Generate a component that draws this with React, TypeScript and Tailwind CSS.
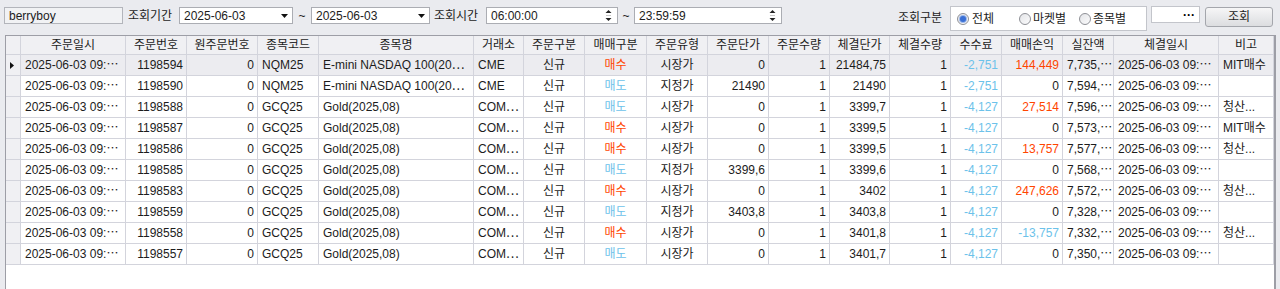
import React from "react"

type Align = "L" | "R" | "C"

const alignCls: Record<Align, string> = {
  L: "justify-start pl-[4px]",
  R: "justify-end pr-[3px]",
  C: "justify-center",
}

const cols: { label: string; w: string; a: Align }[] = [
  { label: "주문일시", w: "w-[105px]", a: "L" },
  { label: "주문번호", w: "w-[61px]", a: "R" },
  { label: "원주문번호", w: "w-[71px]", a: "R" },
  { label: "종목코드", w: "w-[61px]", a: "L" },
  { label: "종목명", w: "w-[155px]", a: "L" },
  { label: "거래소", w: "w-[50px]", a: "L" },
  { label: "주문구분", w: "w-[61px]", a: "C" },
  { label: "매매구분", w: "w-[62px]", a: "C" },
  { label: "주문유형", w: "w-[61px]", a: "C" },
  { label: "주문단가", w: "w-[61px]", a: "R" },
  { label: "주문수량", w: "w-[61px]", a: "R" },
  { label: "체결단가", w: "w-[60px]", a: "R" },
  { label: "체결수량", w: "w-[61px]", a: "R" },
  { label: "수수료", w: "w-[51px]", a: "R" },
  { label: "매매손익", w: "w-[61px]", a: "R" },
  { label: "실잔액", w: "w-[51px]", a: "L" },
  { label: "체결일시", w: "w-[105px]", a: "L" },
  { label: "비고", w: "w-[55px]", a: "L" },
]

const RED = "text-[#ff4500]"
const BLUE = "text-[#6cc2ea]"

const nasdaq = "E-mini NASDAQ 100(20⋯"
const gold = "Gold(2025,08)"

// no, code, name, exch, side, type, price, fillPrice, fee, pnl, balance, note
const rows: string[][] = [
  ["1198594", "NQM25", nasdaq, "CME", "매수", "시장가", "0", "21484,75", "-2,751", "144,449", "7,735,⋯", "MIT매수"],
  ["1198590", "NQM25", nasdaq, "CME", "매도", "지정가", "21490", "21490", "-2,751", "0", "7,594,⋯", ""],
  ["1198588", "GCQ25", gold, "COM⋯", "매도", "시장가", "0", "3399,7", "-4,127", "27,514", "7,596,⋯", "청산..."],
  ["1198587", "GCQ25", gold, "COM⋯", "매수", "시장가", "0", "3399,5", "-4,127", "0", "7,573,⋯", "MIT매수"],
  ["1198586", "GCQ25", gold, "COM⋯", "매수", "시장가", "0", "3399,5", "-4,127", "13,757", "7,577,⋯", "청산..."],
  ["1198585", "GCQ25", gold, "COM⋯", "매도", "지정가", "3399,6", "3399,6", "-4,127", "0", "7,568,⋯", ""],
  ["1198583", "GCQ25", gold, "COM⋯", "매수", "시장가", "0", "3402", "-4,127", "247,626", "7,572,⋯", "청산..."],
  ["1198559", "GCQ25", gold, "COM⋯", "매도", "지정가", "3403,8", "3403,8", "-4,127", "0", "7,328,⋯", ""],
  ["1198558", "GCQ25", gold, "COM⋯", "매수", "시장가", "0", "3401,8", "-4,127", "-13,757", "7,332,⋯", "청산..."],
  ["1198557", "GCQ25", gold, "COM⋯", "매도", "시장가", "0", "3401,7", "-4,127", "0", "7,350,⋯", ""],
]

function ComboArrow() {
  return (
    <svg width="7" height="4" viewBox="0 0 7 4" className="ml-auto mr-[4px]">
      <path d="M0 0H7L3.5 4Z" fill="#111" />
    </svg>
  )
}

function Spin() {
  return (
    <svg width="7" height="13" viewBox="0 0 7 13" className="ml-auto mr-[5px]">
      <path d="M0.5 4H6.5L3.5 1Z" fill="#222" />
      <path d="M0.5 9H6.5L3.5 12Z" fill="#222" />
      <path d="M1 6.5H6" stroke="#c8c8c8" strokeWidth="1" />
    </svg>
  )
}

function Radio({ on }: { on?: boolean }) {
  return (
    <span className="flex h-[12px] w-[12px] items-center justify-center rounded-full border border-[#8e9096] bg-gradient-to-br from-[#e4e5e8] to-[#fbfbfc]">
      {on && <span className="h-[6px] w-[6px] rounded-full bg-[#3a6fd4] ring-1 ring-[#9bb7ea]" />}
    </span>
  )
}

export default function App() {
  return (
    <div className="flex h-[289px] w-[1280px] flex-col overflow-hidden bg-[#eaebef] font-['Liberation_Sans','Noto_Sans_CJK_KR',sans-serif] text-[12px] text-[#1c1c1c]">
      {/* search bar */}
      <div className="flex h-[35px] shrink-0 items-start pr-[7px]">
        <div className="ml-[4px] mt-[7px] flex h-[17px] w-[119px] items-center border border-[#b3b5bb] bg-[#f1f2f4] pl-[4px] leading-none">
          berryboy
        </div>
        <div className="ml-[5px] mt-[7px] flex h-[17px] w-[47px] items-center leading-none">조회기간</div>
        <div className="ml-[4px] mt-[7px] flex h-[17px] w-[114px] items-center border border-[#abadb3] bg-white pl-[4px] leading-none">
          2025-06-03
          <ComboArrow />
        </div>
        <div className="mt-[7px] flex h-[17px] w-[18px] items-center justify-center leading-none">~</div>
        <div className="mt-[7px] flex h-[17px] w-[119px] items-center border border-[#abadb3] bg-white pl-[4px] leading-none">
          2025-06-03
          <ComboArrow />
        </div>
        <div className="ml-[4px] mt-[7px] flex h-[17px] w-[47px] items-center leading-none">조회시간</div>
        <div className="ml-[5px] mt-[7px] flex h-[17px] w-[132px] items-center border border-[#abadb3] bg-white pl-[4px] leading-none">
          06:00:00
          <Spin />
        </div>
        <div className="mt-[7px] flex h-[17px] w-[16px] items-center justify-center leading-none">~</div>
        <div className="mt-[7px] flex h-[17px] w-[148px] items-center border border-[#abadb3] bg-white pl-[4px] leading-none">
          23:59:59
          <Spin />
        </div>

        <div className="ml-auto mt-[9px] flex h-[17px] w-[47px] items-center leading-none">조회구분</div>
        <div className="ml-[5px] mt-[6px] flex h-[25px] w-[197px] items-center border border-[#c3c5cb] bg-white pl-[6px] leading-none">
          <div className="flex w-[62px] items-center gap-[3px]">
            <Radio on />
            <span>전체</span>
          </div>
          <div className="flex w-[60px] items-center gap-[2px]">
            <Radio />
            <span>마켓별</span>
          </div>
          <div className="flex items-center gap-[2px]">
            <Radio />
            <span>종목별</span>
          </div>
        </div>
        <div className="ml-[4px] mt-[6px] flex h-[17px] w-[49px] items-center justify-end border border-[#c3c5cb] bg-white pr-[4px] font-bold leading-none text-black">
          ···
        </div>
        <button className="ml-[5px] mt-[7px] flex h-[20px] w-[68px] items-center justify-center rounded-[3px] border border-[#a4a6ac] bg-gradient-to-b from-[#f6f6f7] to-[#dcdde0] leading-none">
          조회
        </button>
      </div>

      {/* grid */}
      <div className="ml-[5px] mr-[4px] flex-1 border-l border-r-2 border-t border-[#9d9ea6] bg-white">
        <div className="flex h-[19px] border-b border-[#d3d4dc] bg-[#f0f0f3] leading-none">
          <div className="h-full w-[15px] shrink-0 border-r border-[#d3d4dc]" />
          {cols.map((c) => (
            <div
              key={c.label}
              className={`flex h-full shrink-0 items-center justify-center border-r border-[#d3d4dc] ${c.w}`}
            >
              {c.label}
            </div>
          ))}
        </div>

        {rows.map((r, i) => {
          const [no, code, name, exch, side, type, price, fill, fee, pnl, bal, note] = r
          const pnlCls = pnl === "0" ? "" : pnl.startsWith("-") ? BLUE : RED
          const cells: [string, string][] = [
            ["2025-06-03 09:⋯", ""],
            [no, ""],
            ["0", ""],
            [code, ""],
            [name, ""],
            [exch, ""],
            ["신규", ""],
            [side, side === "매수" ? RED : BLUE],
            [type, ""],
            [price, ""],
            ["1", ""],
            [fill, ""],
            ["1", ""],
            [fee, BLUE],
            [pnl, pnlCls],
            [bal, ""],
            ["2025-06-03 09:⋯", ""],
            [note, ""],
          ]
          return (
            <div
              key={no}
              className={`flex h-[21px] border-b border-[#d3d4dc] leading-none ${i === 0 ? "bg-[#ececf0]" : ""}`}
            >
              <div className="flex h-full w-[15px] shrink-0 items-center border-r border-[#d3d4dc] bg-[#f0f0f3] pl-[4px]">
                {i === 0 && (
                  <svg width="4" height="7" viewBox="0 0 4 7">
                    <path d="M0 0L4 3.5L0 7Z" fill="#111" />
                  </svg>
                )}
              </div>
              {cells.map(([text, color], j) => (
                <div
                  key={j}
                  className={`flex h-full shrink-0 items-center overflow-hidden whitespace-nowrap border-r border-[#d3d4dc] ${cols[j].w} ${alignCls[cols[j].a]} ${color}`}
                >
                  {text}
                </div>
              ))}
            </div>
          )
        })}
      </div>
    </div>
  )
}
